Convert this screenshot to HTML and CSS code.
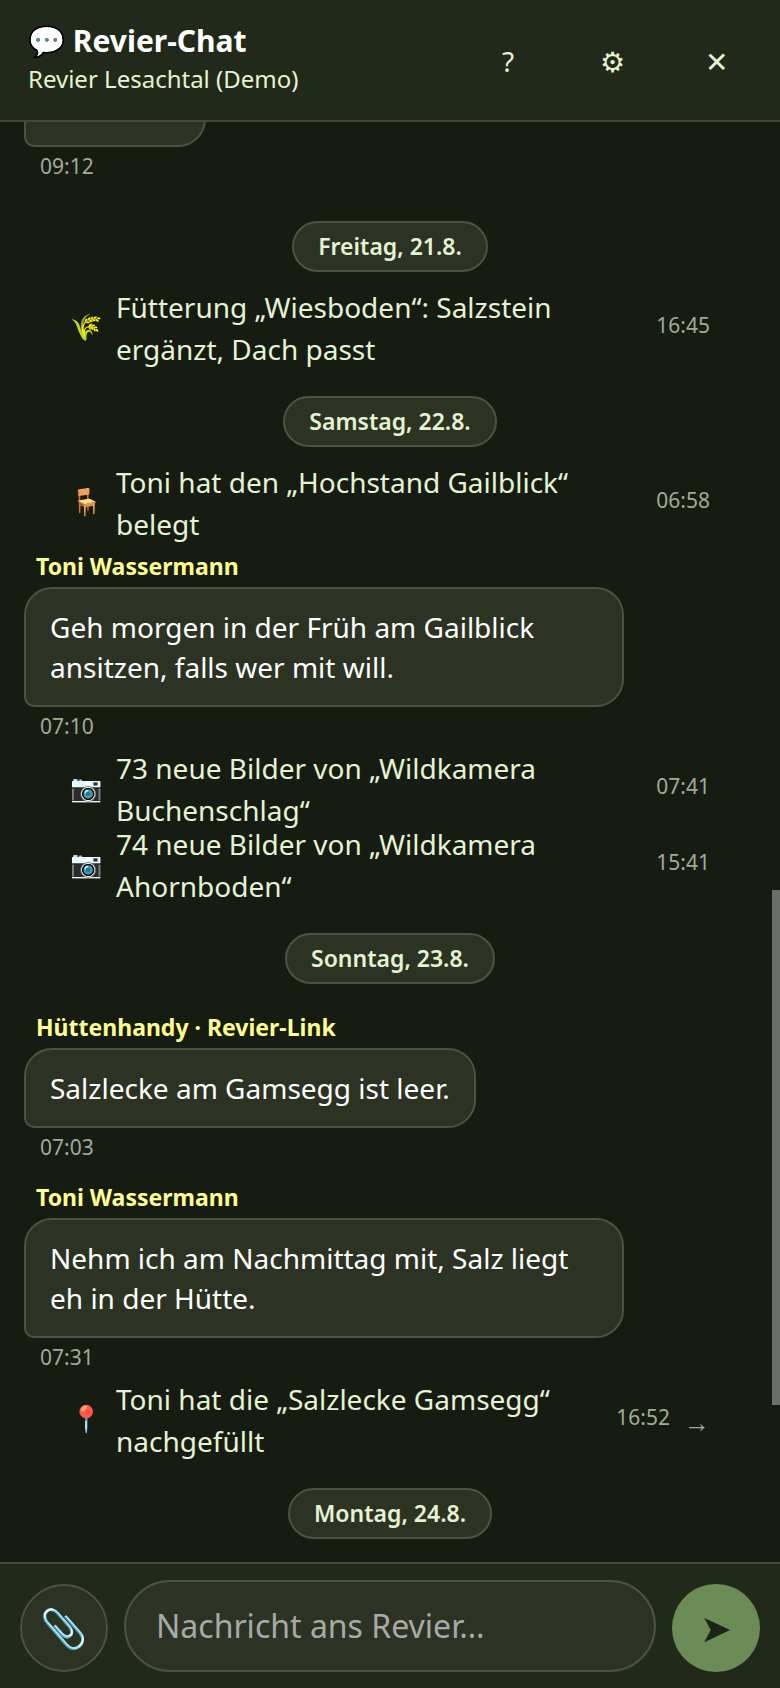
FILE: index.html
```
<!DOCTYPE html>
<html lang="de">
<head>
<meta charset="utf-8">
<meta name="viewport" content="width=device-width, initial-scale=1">
<title>Revier-Chat</title>
<link rel="stylesheet" href="styles.css">
</head>
<body>
<div class="chat">
  <header class="head">
    <div class="head-text">
      <h1 class="title"><span class="emoji">💬</span> Revier-Chat</h1>
      <p class="subtitle">Revier Lesachtal (Demo)</p>
    </div>
    <nav class="tools">
      <button class="tool" type="button">?</button>
      <button class="tool" type="button">⚙</button>
      <button class="tool" type="button">✕</button>
    </nav>
  </header>

  <main class="log">
    <article class="msg">
      <p class="bubble bubble-tail"></p>
      <time class="time msg-time">09:12</time>
    </article>

    <div class="day">Freitag, 21.8.</div>
    <div class="event">
      <span class="emoji">🌾</span>
      <span class="event-text">Fütterung „Wiesboden“: Salzstein ergänzt, Dach passt</span>
      <time class="time">16:45</time>
    </div>

    <div class="day">Samstag, 22.8.</div>
    <div class="event">
      <span class="emoji">🪑</span>
      <span class="event-text">Toni hat den „Hochstand Gailblick“ belegt</span>
      <time class="time">06:58</time>
    </div>
    <article class="msg">
      <h2 class="author">Toni Wassermann</h2>
      <p class="bubble">Geh morgen in der Früh am Gailblick ansitzen, falls wer mit will.</p>
      <time class="time msg-time">07:10</time>
    </article>
    <div class="event">
      <span class="emoji">📷</span>
      <span class="event-text">73 neue Bilder von „Wildkamera Buchenschlag“</span>
      <time class="time">07:41</time>
    </div>
    <div class="event">
      <span class="emoji">📷</span>
      <span class="event-text">74 neue Bilder von „Wildkamera Ahornboden“</span>
      <time class="time">15:41</time>
    </div>

    <div class="day">Sonntag, 23.8.</div>
    <article class="msg">
      <h2 class="author">Hüttenhandy · Revier-Link</h2>
      <p class="bubble">Salzlecke am Gamsegg ist leer.</p>
      <time class="time msg-time">07:03</time>
    </article>
    <article class="msg">
      <h2 class="author">Toni Wassermann</h2>
      <p class="bubble">Nehm ich am Nachmittag mit, Salz liegt eh in der Hütte.</p>
      <time class="time msg-time">07:31</time>
    </article>
    <a class="event" href="#">
      <span class="emoji">📍</span>
      <span class="event-text">Toni hat die „Salzlecke Gamsegg“ nachgefüllt</span>
      <time class="time">16:52</time>
      <span class="arrow">→</span>
    </a>

    <div class="day">Montag, 24.8.</div>
    <div class="scroll-thumb"></div>
  </main>

  <form class="composer">
    <button class="round attach" type="button"><span class="emoji">📎</span></button>
    <input class="entry" type="text" placeholder="Nachricht ans Revier…" aria-label="Nachricht ans Revier…">
    <button class="round send" type="submit">➤</button>
  </form>
</div>
</body>
</html>
```
FILE: styles.css
```
* { box-sizing: border-box; }

body {
  margin: 0;
  background: #171c12;
  color: #e4f3d3;
  font: 28px/42px "Noto Sans", sans-serif;
}

h1, h2, p { margin: 0; }

button, input { font-family: inherit; color: inherit; }

.chat {
  display: flex;
  flex-direction: column;
  height: 100vh;
}

.emoji { filter: brightness(1.3); }

/* Header */
.head {
  display: flex;
  align-items: center;
  justify-content: space-between;
  padding: 16px 20px 16px 28px;
  background: #21291a;
  border-bottom: 2px solid #434b38;
}

.head-text { padding-bottom: 2px; }

.title {
  color: #fff;
  font-size: 30px;
  font-weight: 700;
  line-height: 40px;
}

.subtitle {
  font-size: 24px;
  line-height: 36px;
}

.tools { display: flex; gap: 16px; }

.tool {
  width: 88px;
  height: 88px;
  padding: 2px 0 0;
  border: 0;
  background: none;
  font-size: 28px;
}

/* Message log */
.log {
  position: relative;
  flex: 1;
  min-height: 0;
  overflow: hidden;
  display: flex;
  flex-direction: column;
  justify-content: flex-end;
  padding: 0 24px 5px;
}

.log > * { flex-shrink: 0; }

.day {
  align-self: center;
  margin: 30px 0 18px;
  padding: 8px 24px;
  border: 2px solid #4a5440;
  border-radius: 26px;
  background: #2d3323;
  font-size: 23px;
  font-weight: 600;
  line-height: 31px;
}

.event {
  display: flex;
  align-items: center;
  gap: 14px;
  height: 76px;
  padding: 0 46px;
  color: inherit;
  text-decoration: none;
}

.event .emoji { padding-bottom: 4px; font-size: 26px; }

.event-text { flex: 1; }

.time {
  color: #9fac95;
  font-size: 21px;
  line-height: 30px;
}

.event .time { padding-bottom: 6px; }

.arrow { padding-top: 4px; color: #9fac95; font-size: 26px; }

.msg {
  display: flex;
  flex-direction: column;
  align-items: flex-start;
  margin: 10px 0;
}

.author {
  margin: 0 12px 6px;
  color: #ffff91;
  font-size: 23px;
  font-weight: 700;
  line-height: 30px;
}

.bubble {
  max-width: 82%;
  padding: 18px 24px;
  border: 2px solid #4a5440;
  border-radius: 28px 28px 28px 10px;
  background: #2d3323;
  color: #fff;
  line-height: 40px;
}

.bubble-tail { width: 182px; height: 80px; }

.msg-time { margin: 4px 16px 0; }

.scroll-thumb {
  position: absolute;
  top: 53.3%;
  right: 0;
  width: 8px;
  height: 35.8%;
  background: #6b6f69;
}

/* Composer */
.composer {
  display: flex;
  align-items: flex-end;
  gap: 16px;
  padding: 16px 20px;
  background: #21291a;
  border-top: 2px solid #434b38;
}

.round {
  flex: none;
  width: 88px;
  height: 88px;
  padding: 0 2px 2px 0;
  border: 2px solid #4a5440;
  border-radius: 50%;
  background: #2d3323;
  font-size: 38px;
}

.send {
  padding: 0 0 2px;
  border: 0;
  background: #6b8b57;
  color: #1c2416;
}

.entry {
  flex: 1;
  min-width: 0;
  height: 92px;
  padding: 0 30px 2px;
  border: 2px solid #4a5440;
  border-radius: 46px;
  background: #2d3323;
  font-size: 32px;
}

.entry::placeholder { color: #a9a9a9; opacity: 1; }
```
